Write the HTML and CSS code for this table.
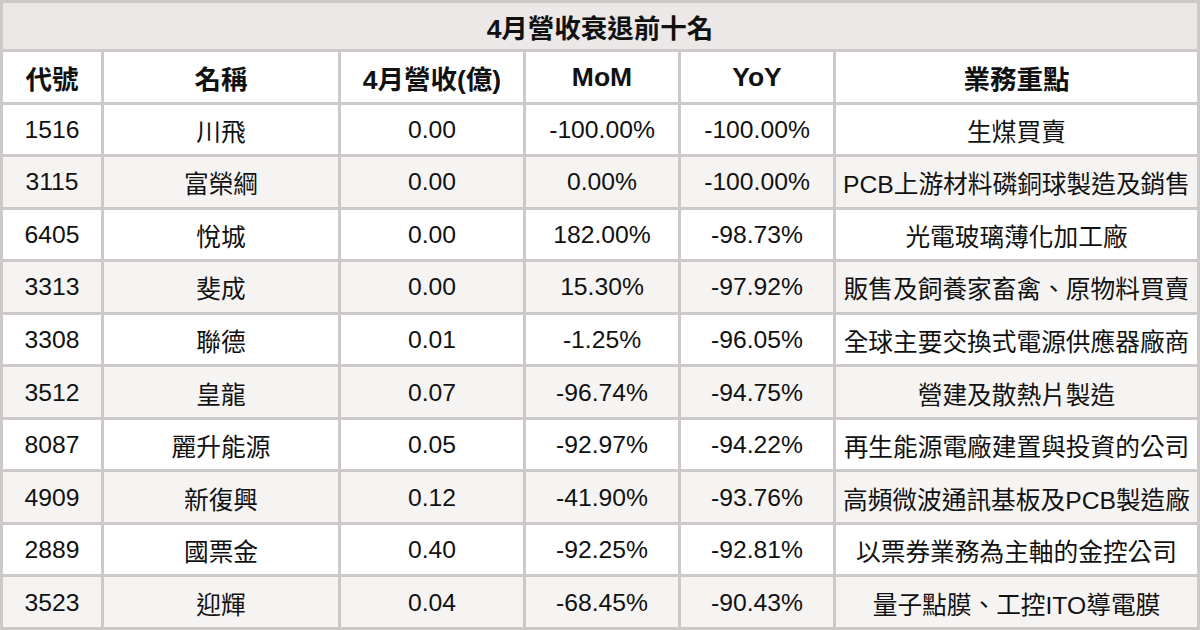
FILE: index.html
```html
<!DOCTYPE html>
<html lang="zh-Hant">
<head>
<meta charset="utf-8">
<title>4月營收衰退前十名</title>
<link rel="stylesheet" href="styles.css">
</head>
<body>
<div class="board">
  <div class="title">4月營收衰退前十名</div>
  <div class="row head"><div>代號</div><div>名稱</div><div>4月營收(億)</div><div>MoM</div><div>YoY</div><div>業務重點</div></div>
  <div class="row"><div>1516</div><div>川飛</div><div>0.00</div><div>-100.00%</div><div>-100.00%</div><div>生煤買賣</div></div>
  <div class="row alt"><div>3115</div><div>富榮綱</div><div>0.00</div><div>0.00%</div><div>-100.00%</div><div>PCB上游材料磷銅球製造及銷售</div></div>
  <div class="row"><div>6405</div><div>悅城</div><div>0.00</div><div>182.00%</div><div>-98.73%</div><div>光電玻璃薄化加工廠</div></div>
  <div class="row alt"><div>3313</div><div>斐成</div><div>0.00</div><div>15.30%</div><div>-97.92%</div><div>販售及飼養家畜禽、原物料買賣</div></div>
  <div class="row"><div>3308</div><div>聯德</div><div>0.01</div><div>-1.25%</div><div>-96.05%</div><div>全球主要交換式電源供應器廠商</div></div>
  <div class="row alt"><div>3512</div><div>皇龍</div><div>0.07</div><div>-96.74%</div><div>-94.75%</div><div>營建及散熱片製造</div></div>
  <div class="row"><div>8087</div><div>麗升能源</div><div>0.05</div><div>-92.97%</div><div>-94.22%</div><div>再生能源電廠建置與投資的公司</div></div>
  <div class="row alt"><div>4909</div><div>新復興</div><div>0.12</div><div>-41.90%</div><div>-93.76%</div><div>高頻微波通訊基板及PCB製造廠</div></div>
  <div class="row"><div>2889</div><div>國票金</div><div>0.40</div><div>-92.25%</div><div>-92.81%</div><div>以票券業務為主軸的金控公司</div></div>
  <div class="row alt"><div>3523</div><div>迎輝</div><div>0.04</div><div>-68.45%</div><div>-90.43%</div><div>量子點膜、工控ITO導電膜</div></div>
</div>
</body>
</html>
```
FILE: styles.css
```css
html, body {
  margin: 0;
  padding: 0;
  background: #ffffff;
}
.board {
  box-sizing: border-box;
  width: 1200px;
  height: 630px;
  padding: 3px;
  background: #cdc9c8;
  display: grid;
  grid-template-rows: 46px repeat(11, 1fr);
  row-gap: 3px;
  font-family: "Liberation Sans", "Noto Sans CJK TC", sans-serif;
  font-size: 24.7px;
  color: #111111;
}
.title {
  background: #ece8e7;
  display: flex;
  align-items: center;
  justify-content: center;
  font-weight: bold;
  font-size: 26.5px;
}
.row {
  display: grid;
  grid-template-columns: 98px 234px 182px 152px 152px 1fr;
  column-gap: 3px;
}
.row > div {
  background: #ffffff;
  display: flex;
  align-items: center;
  justify-content: center;
  white-space: nowrap;
  padding-top: 1px;
}
.row.alt > div {
  background: #f6f4f3;
}
.row.head > div {
  font-weight: bold;
  font-size: 26.5px;
}
```
